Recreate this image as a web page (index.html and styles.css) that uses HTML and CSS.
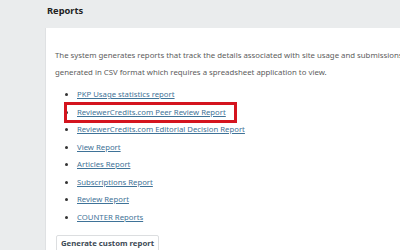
FILE: index.html
```html
<!DOCTYPE html>
<html>
<head>
    <title>Reports</title>
    <link rel="stylesheet" href="styles.css">
</head>
<body>
    <div class="page">
        <h1 class="title">Reports</h1>

        <div class="panel">
            <p class="intro">
                The system generates reports that track the details associated with site usage and submissions over a given period of time. Reports are<br>
                generated in CSV format which requires a spreadsheet application to view.
            </p>

            <ul class="reports">
                <li><a href="#">PKP Usage statistics report</a></li>
                <li><span class="marked"><a href="#">ReviewerCredits.com Peer Review Report</a></span></li>
                <li><a href="#">ReviewerCredits.com Editorial Decision Report</a></li>
                <li><a href="#">View Report</a></li>
                <li><a href="#">Articles Report</a></li>
                <li><a href="#">Subscriptions Report</a></li>
                <li><a href="#">Review Report</a></li>
                <li><a href="#">COUNTER Reports</a></li>
            </ul>

            <button class="custom" type="button">Generate custom report</button>
        </div>
    </div>
</body>
</html>
```

FILE: styles.css
```css
html, body {
    margin: 0;
    overflow: hidden;
}

body {
    background: #eaeced;
    font-family: "Noto Sans", "DejaVu Sans", sans-serif;
    font-size: 7.75px;
    color: #555555;
}

.page {
    width: 640px;
    padding-left: 45px;
}

.title {
    margin: 0 0 11px 0;
    padding: 4.5px 0 0 2px;
    font-size: 9.3px;
    line-height: 12px;
    font-weight: bold;
    color: #222222;
}

.panel {
    background: #FFFFFF;
    border-left: 1px solid #dfe1e3;
    padding: 19px 10px 20px 9px;
}

.intro {
    margin: 0;
    font-size: 7.8px;
    line-height: 17px;
    color: #5c5c5c;
}

.reports {
    margin: 5.5px 0 0 0;
    padding-left: 22px;
    line-height: 17.5px;
    color: #333333;
}

.reports a {
    color: #3f7398;
    text-decoration: underline;
}

.marked {
    position: relative;
    display: inline-block;
}

/* annotation box drawn over the link */
.marked::after {
    content: "";
    position: absolute;
    top: -2px;
    bottom: -2px;
    left: -13px;
    right: -11px;
    border: 3px solid #d4141e;
}

.custom {
    margin: 9px 0 0 1px;
    padding: 1px 4px 8px 4px;
    border: 1px solid #dcdee0;
    border-radius: 2px;
    background: #FFFFFF;
    font-family: inherit;
    font-size: 7.75px;
    line-height: 12px;
    font-weight: bold;
    color: #3d4a55;
}
```
